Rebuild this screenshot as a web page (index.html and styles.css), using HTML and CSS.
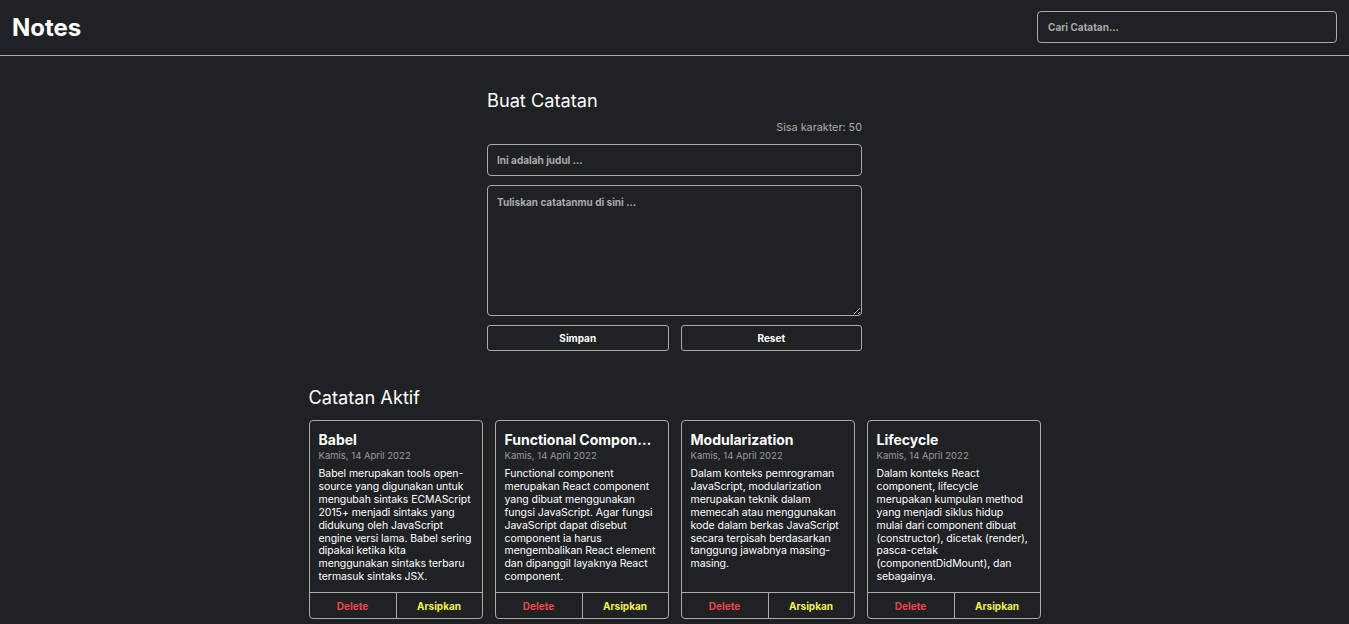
FILE: index.html
```html
<!DOCTYPE html>
<html lang="id">
<head>
<meta charset="utf-8">
<title>Notes</title>
<link rel="stylesheet" href="styles.css">
</head>
<body>
<header class="app-header">
  <h1 class="brand">Notes</h1>
  <input class="search" type="text" placeholder="Cari Catatan...">
</header>
<main class="app-main">
  <section class="note-form">
    <h2 class="section-title">Buat Catatan</h2>
    <p class="char-limit">Sisa karakter: 50</p>
    <input class="field title-field" type="text" placeholder="Ini adalah judul ...">
    <textarea class="field body-field" placeholder="Tuliskan catatanmu di sini ..."></textarea>
    <div class="form-actions">
      <button class="btn" type="button">Simpan</button>
      <button class="btn" type="button">Reset</button>
    </div>
  </section>
  <section class="notes-section">
    <h2 class="section-title">Catatan Aktif</h2>
    <div class="notes-grid">
      <article class="note-card">
        <div class="note-content">
          <h3 class="note-title">Babel</h3>
          <p class="note-date">Kamis, 14 April 2022</p>
          <p class="note-body">Babel merupakan tools open-source yang digunakan untuk mengubah sintaks ECMAScript 2015+ menjadi sintaks yang didukung oleh JavaScript engine versi lama. Babel sering dipakai ketika kita menggunakan sintaks terbaru termasuk sintaks JSX.</p>
        </div>
        <div class="note-actions">
          <button class="action delete" type="button">Delete</button>
          <button class="action archive" type="button">Arsipkan</button>
        </div>
      </article>
      <article class="note-card">
        <div class="note-content">
          <h3 class="note-title">Functional Component</h3>
          <p class="note-date">Kamis, 14 April 2022</p>
          <p class="note-body">Functional component merupakan React component yang dibuat menggunakan fungsi JavaScript. Agar fungsi JavaScript dapat disebut component ia harus mengembalikan React element dan dipanggil layaknya React component.</p>
        </div>
        <div class="note-actions">
          <button class="action delete" type="button">Delete</button>
          <button class="action archive" type="button">Arsipkan</button>
        </div>
      </article>
      <article class="note-card">
        <div class="note-content">
          <h3 class="note-title">Modularization</h3>
          <p class="note-date">Kamis, 14 April 2022</p>
          <p class="note-body">Dalam konteks pemrograman JavaScript, modularization merupakan teknik dalam memecah atau menggunakan kode dalam berkas JavaScript secara terpisah berdasarkan tanggung jawabnya masing-masing.</p>
        </div>
        <div class="note-actions">
          <button class="action delete" type="button">Delete</button>
          <button class="action archive" type="button">Arsipkan</button>
        </div>
      </article>
      <article class="note-card">
        <div class="note-content">
          <h3 class="note-title">Lifecycle</h3>
          <p class="note-date">Kamis, 14 April 2022</p>
          <p class="note-body">Dalam konteks React component, lifecycle merupakan kumpulan method yang menjadi siklus hidup mulai dari component dibuat (constructor), dicetak (render), pasca-cetak (componentDidMount), dan sebagainya.</p>
        </div>
        <div class="note-actions">
          <button class="action delete" type="button">Delete</button>
          <button class="action archive" type="button">Arsipkan</button>
        </div>
      </article>
    </div>
  </section>
</main>
</body>
</html>
```

FILE: styles.css
```css
* { box-sizing: border-box; }

html, body {
  margin: 0;
  padding: 0;
  background: #202124;
  color: #ffffff;
  font-family: Inter, "Noto Sans", "Liberation Sans", sans-serif;
}

.app-header {
  display: flex;
  align-items: center;
  justify-content: space-between;
  height: 56px;
  padding: 0 12px;
  border-bottom: 1px solid #aaaaaa;
}

.brand {
  margin: 0;
  font-size: 24px;
  font-weight: 700;
  line-height: 1;
}

.search {
  width: 300px;
  height: 32px;
  margin-top: -2px;
  padding: 0 10px;
  background: #202124;
  color: #ffffff;
  border: 1px solid #aaaaaa;
  border-radius: 4px;
  font-family: inherit;
  font-size: 10px;
  font-weight: 700;
  outline: none;
}

.search::placeholder,
.field::placeholder {
  color: #aaaaaa;
  opacity: 1;
}

.app-main {
  display: flex;
  flex-direction: column;
  align-items: center;
  padding-top: 33px;
}

.note-form {
  width: 375px;
  display: flex;
  flex-direction: column;
}

.section-title {
  margin: 0;
  font-size: 18.2px;
  font-weight: 400;
  line-height: 22px;
}

.char-limit {
  margin: 10px 0 0;
  text-align: right;
  font-size: 10.8px;
  line-height: 14px;
  color: #aaaaaa;
}

.field {
  display: block;
  width: 100%;
  background: #202124;
  color: #ffffff;
  border: 1px solid #aaaaaa;
  border-radius: 4px;
  font-family: inherit;
  font-size: 10px;
  font-weight: 700;
  padding: 0 9px;
  outline: none;
}

.title-field {
  height: 32px;
  margin-top: 9px;
}

.body-field {
  height: 131px;
  margin-top: 9px;
  padding: 10px 9px;
  resize: vertical;
}

.form-actions {
  display: grid;
  grid-template-columns: 1fr 1fr;
  column-gap: 12px;
  margin-top: 9px;
}

.btn {
  height: 26px;
  background: #202124;
  color: #ffffff;
  border: 1px solid #aaaaaa;
  border-radius: 3px;
  font-family: inherit;
  font-size: 10px;
  font-weight: 700;
}

.notes-section {
  width: 732px;
  margin-top: 35px;
}

.notes-grid {
  display: grid;
  grid-template-columns: repeat(4, minmax(0, 1fr));
  column-gap: 12px;
  margin-top: 12px;
}

.note-card {
  display: flex;
  flex-direction: column;
  min-width: 0;
  height: 199px;
  border: 1px solid #aaaaaa;
  border-radius: 4px;
}

.note-content {
  flex: 1;
  padding: 10px 9px 0;
  min-width: 0;
}

.note-title {
  margin: 0;
  font-size: 14px;
  font-weight: 700;
  line-height: 17px;
  white-space: nowrap;
  overflow: hidden;
  text-overflow: ellipsis;
}

.note-date {
  margin: 2px 0 0;
  font-size: 9.5px;
  line-height: 12px;
  color: #9a9a9a;
}

.note-body {
  margin: 6px 0 0;
  font-size: 10.5px;
  letter-spacing: -0.06px;
  line-height: 12.9px;
}

.note-actions {
  display: grid;
  grid-template-columns: 1fr 1fr;
  height: 26px;
  border-top: 1px solid #aaaaaa;
}

.action {
  background: transparent;
  border: none;
  font-family: inherit;
  font-size: 10px;
  font-weight: 700;
  padding: 0;
}

.action + .action {
  border-left: 1px solid #aaaaaa;
}

.delete { color: #ef4444; }
.archive { color: #f4f446; }
```
